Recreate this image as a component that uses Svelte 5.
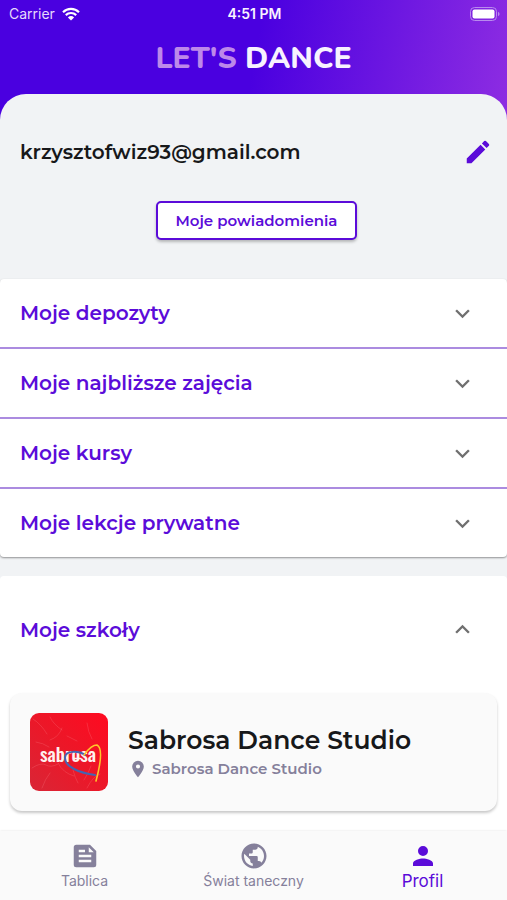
<script lang="ts">
    let sections = $state([
        { id: "deposits", title: "Moje depozyty", open: false },
        { id: "classes", title: "Moje najbliższe zajęcia", open: false },
        { id: "courses", title: "Moje kursy", open: false },
        { id: "lessons", title: "Moje lekcje prywatne", open: false },
    ]);

    let schoolsOpen = $state(true);
</script>

{#snippet chevron(open: boolean)}
    <svg class="chevron" class:open viewBox="0 0 24 24" aria-hidden="true">
        <path d="M16.59 8.59 12 13.17 7.41 8.59 6 10l6 6 6-6z" />
    </svg>
{/snippet}

<div class="app">
    <header>
        <div class="status-bar">
            <div class="carrier">
                <span>Carrier</span>
                <svg class="wifi" viewBox="0 0 18 14" aria-hidden="true">
                    <path d="M1 5.2a11.5 11.5 0 0 1 16 0M3.8 8.1a7.5 7.5 0 0 1 10.4 0" />
                    <path class="dot" d="M9 13.6 5.9 10.4a4.5 4.5 0 0 1 6.2 0z" />
                </svg>
            </div>
            <span class="time">4:51 PM</span>
            <svg class="battery" viewBox="0 0 30 14" aria-hidden="true">
                <rect class="shell" x="0.5" y="0.5" width="26" height="13" rx="4" />
                <rect class="charge" x="2.5" y="2.5" width="22" height="9" rx="2" />
                <path class="tip" d="M28 4.8v4.4q1.6-.8 1.6-2.2T28 4.8z" />
            </svg>
        </div>
        <h1><span>LET'S</span> DANCE</h1>
    </header>

    <main>
        <section class="account">
            <div class="account-row">
                <h2>krzysztofwiz93@gmail.com</h2>
                <button type="button" class="edit" aria-label="Edytuj">
                    <svg viewBox="0 0 24 24" aria-hidden="true">
                        <path d="M3 17.25V21h3.75L17.81 9.94l-3.75-3.75zM20.71 7.04a1 1 0 0 0 0-1.41l-2.34-2.34a1 1 0 0 0-1.41 0l-1.83 1.83 3.75 3.75z" />
                    </svg>
                </button>
            </div>
            <button type="button" class="notifications">Moje powiadomienia</button>
        </section>

        <section class="panel">
            {#each sections as section (section.id)}
                <button
                    type="button"
                    class="panel-row"
                    aria-expanded={section.open}
                    onclick={() => (section.open = !section.open)}
                >
                    <span>{section.title}</span>
                    {@render chevron(section.open)}
                </button>
            {/each}
        </section>

        <section class="panel schools">
            <button
                type="button"
                class="panel-row tall"
                aria-expanded={schoolsOpen}
                onclick={() => (schoolsOpen = !schoolsOpen)}
            >
                <span>Moje szkoły</span>
                {@render chevron(schoolsOpen)}
            </button>
            {#if schoolsOpen}
                <article class="school-card">
                    <svg class="school-logo" viewBox="0 0 78 78" role="img" aria-label="Sabrosa">
                        <defs>
                            <linearGradient id="red" x1="0" y1="1" x2="1" y2="0">
                                <stop offset="0" stop-color="#d92636" />
                                <stop offset="0.5" stop-color="#ec1728" />
                                <stop offset="1" stop-color="#ff0a20" />
                            </linearGradient>
                        </defs>
                        <rect width="78" height="78" fill="url(#red)" />
                        <g class="creases">
                            <path d="M3 6q8 5 14 15M20 4q3 7 12 13M32 15q-3 9-12 12M6 29q7 1 13 5M57 10q1 9 5 16M2 55q9-6 14-3t12-1M12 75q3-9 8-15M28 50q5 10 16 13M43 57q2 8 5 13M61 53q-3 8-7 14M57 75q6-12 13-14M37 23l10 5" />
                        </g>
                        <text x="10" y="49">sabrosa</text>
                        <path class="underline" d="M44 45.5h7" />
                        <path class="blue" d="M55 42c-6-4-19-5-20 2-1 10 15 16 30 18" />
                        <path class="yellow" d="M54 42c3-4 7-10 13-10 6 3 3 21-1 36" />
                    </svg>
                    <div class="school-info">
                        <h3>Sabrosa Dance Studio</h3>
                        <p>
                            <svg viewBox="0 0 24 24" aria-hidden="true">
                                <path d="M12 2a7 7 0 0 0-7 7c0 5.25 7 13 7 13s7-7.75 7-13a7 7 0 0 0-7-7zm0 9.5a2.5 2.5 0 0 1 0-5 2.5 2.5 0 0 1 0 5z" />
                            </svg>
                            <span>Sabrosa Dance Studio</span>
                        </p>
                    </div>
                </article>
            {/if}
        </section>
    </main>

    <nav>
        <a href="#tablica">
            <svg viewBox="0 0 24 24" aria-hidden="true">
                <path d="M16 3H5a2 2 0 0 0-2 2v14a2 2 0 0 0 2 2h14a2 2 0 0 0 2-2V8zM7 7h5v2H7zm10 10H7v-2h10zm0-4H7v-2h10zm-2-4V5l4 4z" />
            </svg>
            <span>Tablica</span>
        </a>
        <a href="#swiat">
            <svg viewBox="0 0 24 24" aria-hidden="true">
                <path d="M12 2C6.48 2 2 6.48 2 12s4.48 10 10 10 10-4.48 10-10S17.52 2 12 2zm-1 17.93c-3.95-.49-7-3.85-7-7.93 0-.62.08-1.21.21-1.79L9 15v1c0 1.1.9 2 2 2zm6.9-2.54c-.26-.81-1-1.39-1.9-1.39h-1v-3c0-.55-.45-1-1-1H8v-2h2c.55 0 1-.45 1-1V7h2c1.1 0 2-.9 2-2v-.41c2.93 1.19 5 4.06 5 7.41 0 2.08-.8 3.97-2.1 5.39z" />
            </svg>
            <span>Świat taneczny</span>
        </a>
        <a href="#profil" class="active" aria-current="page">
            <svg viewBox="0 0 24 24" aria-hidden="true">
                <path d="M12 12a4 4 0 1 0 0-8 4 4 0 0 0 0 8zm0 2c-2.67 0-8 1.34-8 4v2h16v-2c0-2.66-5.33-4-8-4z" />
            </svg>
            <span>Profil</span>
        </a>
    </nav>
</div>

<style>
    :global(body) {
        margin: 0;
    }

    .app {
        min-height: 100vh;
        display: flex;
        flex-direction: column;
        background: linear-gradient(100deg, #4a00e0 50%, #8e2de2 100%) top / 100% 130px no-repeat #f1f3f5;
        font-family: Montserrat, Inter, sans-serif;
        color: #17181a;
    }

    h1,
    h2,
    h3,
    p {
        margin: 0;
    }

    button {
        font-family: inherit;
        cursor: pointer;
    }

    header {
        height: 94px;
        color: #f8f2ff;
    }

    .status-bar {
        display: grid;
        grid-template-columns: 1fr auto 1fr;
        align-items: center;
        height: 27px;
        padding: 0 7px 0 9px;
        font-family: Inter, sans-serif;
        font-size: 14px;
    }

    .carrier {
        display: flex;
        align-items: center;
        gap: 7px;
        color: #e6d9fb;
    }

    .wifi {
        width: 18px;
        height: 14px;
        fill: none;
        stroke: #fff;
        stroke-width: 2.2;
    }

    .wifi .dot {
        fill: #fff;
        stroke: none;
    }

    .time {
        font-weight: 600;
    }

    .battery {
        justify-self: end;
        width: 30px;
        height: 14px;
    }

    .shell {
        fill: none;
        stroke: #b88bed;
    }

    .charge {
        fill: #fff;
    }

    .tip {
        fill: #b88bed;
    }

    h1 {
        padding-top: 12px;
        font-family: Nunito, "Open Sans", sans-serif;
        font-size: 30px;
        line-height: 40px;
        font-weight: 800;
        text-align: center;
    }

    h1 span {
        color: #bd88ea;
    }

    main {
        flex: 1;
        display: flex;
        flex-direction: column;
        gap: 19px;
        overflow: hidden;
        border-radius: 26px 26px 0 0;
        background: #f1f3f5;
    }

    .account {
        display: flex;
        flex-direction: column;
        align-items: center;
        gap: 34px;
        padding: 43px 14px 20px 20px;
    }

    .account-row {
        display: flex;
        align-items: center;
        justify-content: space-between;
        align-self: stretch;
    }

    h2 {
        font-size: 20px;
        line-height: 28px;
        font-weight: 600;
    }

    .edit {
        display: flex;
        padding: 0;
        border: 0;
        background: none;
    }

    .edit svg {
        width: 30px;
        height: 30px;
        fill: #5b0bd9;
    }

    .notifications {
        height: 39px;
        padding: 0 18px;
        border: 2px solid #5b0bd9;
        border-radius: 5px;
        background: #fff;
        box-shadow: 0 2px 3px rgba(0, 0, 0, 0.25);
        color: #5b0bd9;
        font-size: 15px;
        font-weight: 600;
    }

    .panel {
        border-radius: 4px;
        background: #fff;
        box-shadow: 0 1px 2px rgba(0, 0, 0, 0.4);
    }

    .panel-row {
        display: flex;
        align-items: center;
        justify-content: space-between;
        width: 100%;
        height: 70px;
        padding: 0 30px 0 20px;
        border: 0;
        border-bottom: 2px solid #ab8be0;
        background: none;
        color: #5b0bd9;
        font-size: 20px;
        font-weight: 600;
        text-align: left;
    }

    .panel-row:last-child {
        height: 68px;
        border-bottom: 0;
    }

    .chevron {
        width: 29px;
        height: 29px;
        fill: #707070;
    }

    .chevron.open {
        transform: rotate(180deg);
    }

    .schools {
        flex: 1;
        border-radius: 4px 4px 0 0;
        box-shadow: none;
    }

    .panel-row.tall {
        height: 107px;
        border-bottom: 0;
    }

    .school-card {
        display: flex;
        align-items: center;
        gap: 20px;
        margin: 10px 10px 20px;
        padding: 20px;
        border-radius: 12px;
        background: #fafafa;
        box-shadow: 0 2px 3px rgba(0, 0, 0, 0.22);
    }

    .school-logo {
        flex: none;
        width: 78px;
        height: 78px;
        border-radius: 9px;
    }

    .school-logo path {
        fill: none;
        stroke-linecap: round;
    }

    .creases {
        stroke: #ff8c93;
        stroke-width: 0.8;
        opacity: 0.3;
    }

    .school-logo text {
        fill: #fff0ee;
        font-family: Oswald, "Roboto Condensed", "DejaVu Sans Condensed", sans-serif;
        font-size: 19px;
        font-weight: 500;
    }

    .underline {
        stroke: #fff0ee;
        stroke-width: 1.5;
    }

    .school-logo .blue {
        stroke: #4664b0;
        stroke-width: 2;
    }

    .school-logo .yellow {
        stroke: #ffc629;
        stroke-width: 1.6;
    }

    h3 {
        font-size: 25px;
        line-height: 34px;
        font-weight: 600;
    }

    .school-info p {
        display: flex;
        align-items: center;
        gap: 4px;
        color: #85809b;
        font-size: 15px;
        line-height: 24px;
        font-weight: 600;
    }

    .school-info svg {
        width: 20px;
        height: 20px;
        fill: currentColor;
    }

    nav {
        display: grid;
        grid-template-columns: repeat(3, 1fr);
        height: 70px;
        background: #fafafa;
        box-shadow: 0 0 2px rgba(0, 0, 0, 0.12);
        font-family: Inter, sans-serif;
    }

    nav a {
        display: flex;
        flex-direction: column;
        align-items: center;
        padding-top: 10px;
        color: #85809b;
        font-size: 14px;
        line-height: 20px;
        text-decoration: none;
    }

    nav svg {
        width: 30px;
        height: 30px;
        fill: currentColor;
    }

    nav .active {
        color: #5b0bd9;
        font-size: 17px;
    }
</style>
